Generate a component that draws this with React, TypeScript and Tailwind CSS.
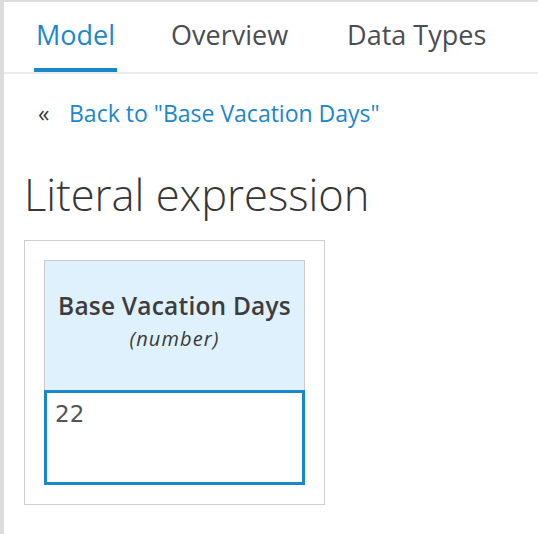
import React from "react";

export default function App() {
  return (
    <div className="w-[538px] h-[534px] overflow-hidden bg-white border-l-4 border-t-2 border-[#dcdcdc] font-['Open_Sans',sans-serif] box-border">
      {/* Tabs */}
      <div className="flex items-start h-[70px] border-b-2 border-[#ececec] pl-[30px] box-content">
        <div className="h-[70px] box-border border-b-4 border-[#1b87cb] px-[2px] pt-[14px] text-[27px] leading-[37px] text-[#1b87cb]">
          Model
        </div>
        <div className="ml-[52px] h-[70px] box-border border-b-4 border-transparent px-[2px] pt-[14px] text-[27px] leading-[37px] text-[#4a4d52]">
          Overview
        </div>
        <div className="ml-[55px] h-[70px] box-border border-b-4 border-transparent px-[2px] pt-[14px] text-[27px] leading-[37px] text-[#4a4d52]">
          Data Types
        </div>
      </div>

      {/* Back link */}
      <div className="flex items-center mt-[24px] pl-[34px] text-[23px] leading-[31px]">
        <span className="w-[31px] text-[#3a3a3a]">«</span>
        <span className="text-[#1b87cb]">Back to "Base Vacation Days"</span>
      </div>

      {/* Heading */}
      <h1 className="mt-[36px] ml-[20px] text-[43.5px] leading-[59px] font-light text-[#363636]">
        Literal expression
      </h1>

      {/* Expression box */}
      <div className="mt-[16px] ml-[20px] w-[301px] h-[265px] box-border border border-[#cfcfcf] p-[19px]">
        <div className="flex flex-col w-[261px] h-[225px]">
          <div className="h-[130px] box-border border border-[#cbcbcb] border-b-0 bg-[#dff1fc] flex flex-col items-center pt-[28px]">
            <div className="text-[24.5px] leading-[33px] font-semibold tracking-[0.2px] text-[#3d3d3d]">
              Base Vacation Days
            </div>
            <div className="mt-[5px] text-[20px] leading-[24px] italic tracking-[1.1px] text-[#3a3a3a]">
              (number)
            </div>
          </div>
          <div className="h-[95px] box-border border-[3px] border-[#1b87cb] bg-white px-[8px] pt-[8px] font-['DejaVu_Sans',sans-serif] text-[23px] leading-[27px] text-[#555]">
            22
          </div>
        </div>
      </div>
    </div>
  );
}
